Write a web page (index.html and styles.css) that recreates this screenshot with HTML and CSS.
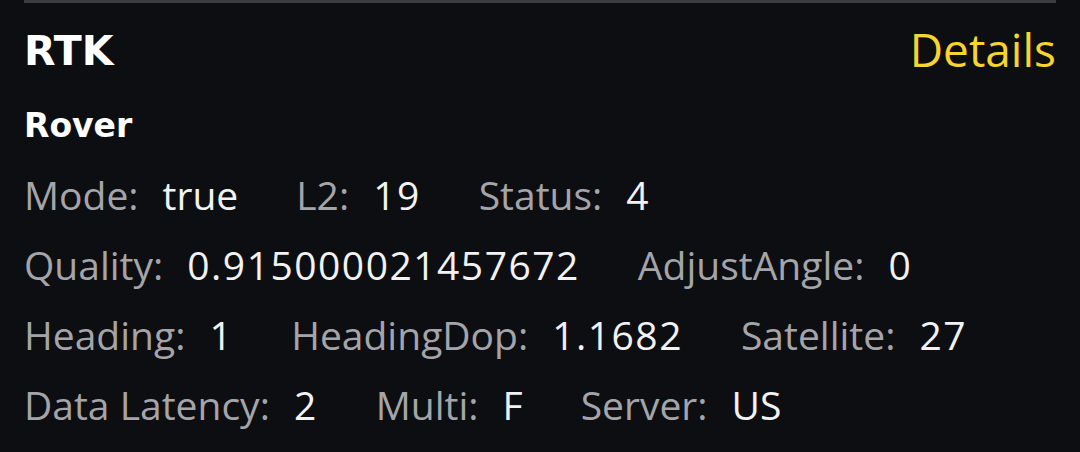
FILE: index.html
```html
<!DOCTYPE html>
<html>
<head>
<meta charset="utf-8">
<link rel="stylesheet" href="styles.css">
</head>
<body>
<div class="card">
  <div class="divider"></div>
  <div class="header">
    <div class="title">RTK</div>
    <div class="details">Details</div>
  </div>
  <div class="subtitle">Rover</div>
  <div class="rows">
    <div class="row">
      <span class="item"><span class="label">Mode:</span><span class="value">true</span></span>
      <span class="item"><span class="label">L2:</span><span class="value num">19</span></span>
      <span class="item"><span class="label">Status:</span><span class="value num">4</span></span>
    </div>
    <div class="row">
      <span class="item"><span class="label">Quality:</span><span class="value num">0.915000021457672</span></span>
      <span class="item"><span class="label">AdjustAngle:</span><span class="value num">0</span></span>
    </div>
    <div class="row">
      <span class="item"><span class="label">Heading:</span><span class="value num">1</span></span>
      <span class="item"><span class="label">HeadingDop:</span><span class="value num">1.1682</span></span>
      <span class="item"><span class="label">Satellite:</span><span class="value num">27</span></span>
    </div>
    <div class="row">
      <span class="item"><span class="label">Data Latency:</span><span class="value num">2</span></span>
      <span class="item"><span class="label">Multi:</span><span class="value">F</span></span>
      <span class="item"><span class="label">Server:</span><span class="value">US</span></span>
    </div>
  </div>
</div>
</body>
</html>
```
FILE: styles.css
```css
html, body {
  margin: 0;
  padding: 0;
  background: #0d0e12;
}
body {
  width: 1080px;
  height: 452px;
  overflow: hidden;
}
.card {
  padding: 0 24px;
}
.divider {
  height: 3px;
  background: #3b3c41;
}
.header {
  height: 96px;
  display: flex;
  align-items: center;
  justify-content: space-between;
}
.title {
  font-family: "DejaVu Sans", sans-serif;
  font-weight: bold;
  font-size: 41px;
  color: #ffffff;
}
.details {
  font-family: "Open Sans", sans-serif;
  font-size: 46px;
  padding-bottom: 5px;
  color: #f7d42e;
}
.subtitle {
  font-family: "DejaVu Sans", sans-serif;
  font-weight: bold;
  font-size: 33px;
  line-height: 54px;
  color: #ffffff;
}
.rows {
  margin-top: 7px;
  font-family: "Open Sans", sans-serif;
  font-size: 39px;
}
.row {
  display: flex;
  gap: 58px;
  height: 70px;
  line-height: 70px;
  white-space: nowrap;
}
.item {
  display: flex;
  gap: 24px;
}
.label {
  color: #a5a5a9;
}
.value {
  color: #f2f2f2;
}
.num {
  letter-spacing: 1.5px;
}
```
